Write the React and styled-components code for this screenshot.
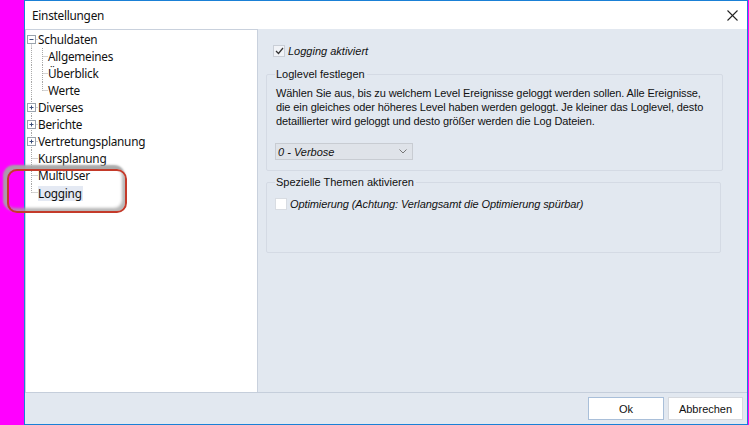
import React from "react";
import styled, { createGlobalStyle } from "styled-components";

const Global = createGlobalStyle`
  html, body { margin: 0; padding: 0; }
  body { background: #ff00ff; width: 749px; height: 425px; overflow: hidden; }
  * { box-sizing: border-box; }
`;

const Page = styled.div`
  position: relative;
  width: 749px;
  height: 425px;
  padding: 0 1px 0 24px;
  display: flex;
`;

const Window = styled.div`
  flex: 1;
  height: 425px;
  border: 1px solid #1a80d6;
  background: #e2e8f0;
  display: flex;
  flex-direction: column;
`;

const TitleBar = styled.div`
  height: 28px;
  background: #ffffff;
  display: flex;
  align-items: center;
  justify-content: space-between;
  padding: 0 9px 0 7px;
  font-family: "Noto Sans", "Open Sans", sans-serif;
  font-size: 11.8px;
  letter-spacing: -0.25px;
  color: #111;
`;

const Main = styled.div`
  flex: 1;
  display: flex;
  min-height: 0;
`;

const TreePanel = styled.div`
  width: 233px;
  background: #fff;
  border: 1px solid #c9d1dd;
  border-bottom: none;
  padding-top: 1px;
  font-family: "Noto Sans", "Open Sans", sans-serif;
  font-size: 11.8px;
  letter-spacing: -0.25px;
  color: #111;
`;

const Row = styled.div`
  height: 17px;
  display: flex;
  align-items: center;
`;

const Guide = styled.svg`
  flex: none;
  width: ${(p) => (p.$level === 1 ? 22 : 12)}px;
  height: 17px;
`;

const Label = styled.span`
  display: inline-block;
  line-height: 15px;
  padding: 0 1px 0 0;
  margin-top: ${(p) => (p.$selected ? 2 : 0)}px;
  background: ${(p) => (p.$selected ? "#e4e9f3" : "transparent")};
  white-space: nowrap;
`;

const Content = styled.div`
  flex: 1;
  padding: 16px 24px 0 8px;
  font-family: "Liberation Sans", Arial, sans-serif;
  font-size: 11px;
  color: #111;
  display: flex;
  flex-direction: column;
`;

const CheckRow = styled.label`
  display: flex;
  align-items: center;
  gap: 3px;
  height: 12px;
  margin-top: ${(p) => p.$mt || 0}px;
  padding-left: ${(p) => p.$indent || 0}px;
  font-style: italic;
  letter-spacing: ${(p) => p.$ls || 0}px;
`;

const Box = styled.span`
  width: 12px;
  height: 12px;
  flex: none;
  background: ${(p) => (p.$checked ? "#f1f3f7" : "#ffffff")};
  border: 1px solid ${(p) => (p.$checked ? "#c9ced6" : "#d8dce2")};
  display: flex;
  align-items: center;
  justify-content: center;
`;

const Group = styled.fieldset`
  margin: ${(p) => p.$mt}px ${(p) => p.$mr || 0}px 0 0;
  padding: 0 9px ${(p) => p.$pb}px 8px;
  border: 1px solid #d4dae4;
  border-radius: 2px;
  min-width: 0;
  min-height: ${(p) => p.$h}px;
`;

const Legend = styled.legend`
  padding: 0 2px 0 1px;
  line-height: 13px;
  font-size: 11px;
  color: #111;
`;

const Desc = styled.p`
  margin: 5px 0 0 1px;
  line-height: 14px;
  font-size: 11px;
  letter-spacing: -0.1px;
`;

const Select = styled.div`
  margin: 15px 0 0 0;
  width: 138px;
  height: 17px;
  background: #dfe3e9;
  border: 1px solid #c8ccd2;
  display: flex;
  align-items: center;
  justify-content: space-between;
  padding: 0 5px 0 2px;
  font-style: italic;
`;

const Footer = styled.div`
  height: 32px;
  border-top: 1px solid #c5cedb;
  display: flex;
  justify-content: flex-end;
  align-items: flex-start;
  gap: 4px;
  padding: 4px 4px 0 0;
`;

const Button = styled.button`
  width: ${(p) => p.$w}px;
  height: 23px;
  background: #fff;
  border: 1px solid ${(p) => (p.$primary ? "#a9bfd9" : "#d6d9de")};
  font-family: "Liberation Sans", Arial, sans-serif;
  font-size: 11px;
  color: #111;
  padding: 0;
`;

const Annotation = styled.div`
  position: absolute;
  left: 7px;
  top: 169px;
  width: 120px;
  height: 44px;
  border: 2px solid #c43a2a;
  border-radius: 10px;
  box-shadow: -3px -3px 2px 1px rgba(165, 165, 165, 0.95),
    inset -3px -3px 3px 0 rgba(165, 165, 165, 0.8);
  pointer-events: none;
`;

const LINE = "#a9a9a9";

function Connector({ level, toggle, first, last, lastChild }) {
  if (level === 1) {
    return (
      <Guide $level={1} viewBox="0 0 22 17">
        <line x1="5.5" y1="0" x2="5.5" y2="17" stroke={LINE} strokeDasharray="1 1" />
        <line x1="16.5" y1="0" x2="16.5" y2={lastChild ? 8.5 : 17} stroke={LINE} strokeDasharray="1 1" />
        <line x1="16.5" y1="8.5" x2="22" y2="8.5" stroke={LINE} strokeDasharray="1 1" />
      </Guide>
    );
  }
  return (
    <Guide $level={0} viewBox="0 0 12 17">
      <line x1="5.5" y1={first ? 8.5 : 0} x2="5.5" y2={last ? 8.5 : 17} stroke={LINE} strokeDasharray="1 1" />
      <line x1="5.5" y1="8.5" x2="12" y2="8.5" stroke={LINE} strokeDasharray="1 1" />
      {toggle && (
        <g>
          <rect x="1.5" y="4.5" width="8" height="8" fill="#fff" stroke="#9aa3ad" />
          <line x1="3.5" y1="8.5" x2="7.5" y2="8.5" stroke="#3a4f7a" />
          {toggle === "plus" && <line x1="5.5" y1="6.5" x2="5.5" y2="10.5" stroke="#3a4f7a" />}
        </g>
      )}
    </Guide>
  );
}

const tree = [
  { label: "Schuldaten", level: 0, toggle: "minus", first: true },
  { label: "Allgemeines", level: 1 },
  { label: "Überblick", level: 1 },
  { label: "Werte", level: 1, lastChild: true },
  { label: "Diverses", level: 0, toggle: "plus" },
  { label: "Berichte", level: 0, toggle: "plus" },
  { label: "Vertretungsplanung", level: 0, toggle: "plus" },
  { label: "Kursplanung", level: 0 },
  { label: "MultiUser", level: 0 },
  { label: "Logging", level: 0, last: true, selected: true },
];

export default function App() {
  return (
    <>
      <Global />
      <Page>
        <Window>
          <TitleBar>
            <span>Einstellungen</span>
            <svg width="11" height="11" viewBox="0 0 11 11">
              <line x1="0.5" y1="0.5" x2="10.5" y2="10.5" stroke="#222" strokeWidth="1.1" />
              <line x1="10.5" y1="0.5" x2="0.5" y2="10.5" stroke="#222" strokeWidth="1.1" />
            </svg>
          </TitleBar>
          <Main>
            <TreePanel>
              {tree.map((t) => (
                <Row key={t.label}>
                  <Connector {...t} />
                  <Label $selected={t.selected}>{t.label}</Label>
                </Row>
              ))}
            </TreePanel>
            <Content>
              <CheckRow $indent={7}>
                <Box $checked>
                  <svg width="9" height="8" viewBox="0 0 9 8">
                    <polyline points="1,4 3.5,6.5 8,1" fill="none" stroke="#333" strokeWidth="1.2" />
                  </svg>
                </Box>
                Logging aktiviert
              </CheckRow>
              <Group $mt={11} $pb={10} $h={0}>
                <Legend>Loglevel festlegen</Legend>
                <Desc>
                  Wählen Sie aus, bis zu welchem Level Ereignisse geloggt werden sollen. Alle Ereignisse,
                  die ein gleiches oder höheres Level haben werden geloggt. Je kleiner das Loglevel, desto
                  detaillierter wird geloggt und desto größer werden die Log Dateien.
                </Desc>
                <Select>
                  <span>0 - Verbose</span>
                  <svg width="8" height="5" viewBox="0 0 8 5">
                    <polyline points="0.5,0.5 4,4 7.5,0.5" fill="none" stroke="#777" />
                  </svg>
                </Select>
              </Group>
              <Group $mt={5} $mr={2} $pb={0} $h={77}>
                <Legend>Spezielle Themen aktivieren</Legend>
                <CheckRow $indent={0} $mt={9} $ls={-0.1}>
                  <Box />
                  <span>Optimierung (Achtung: Verlangsamt die Optimierung spürbar)</span>
                </CheckRow>
              </Group>
            </Content>
          </Main>
          <Footer>
            <Button $primary $w={76}>Ok</Button>
            <Button $w={75}>Abbrechen</Button>
          </Footer>
        </Window>
        <Annotation />
      </Page>
    </>
  );
}
